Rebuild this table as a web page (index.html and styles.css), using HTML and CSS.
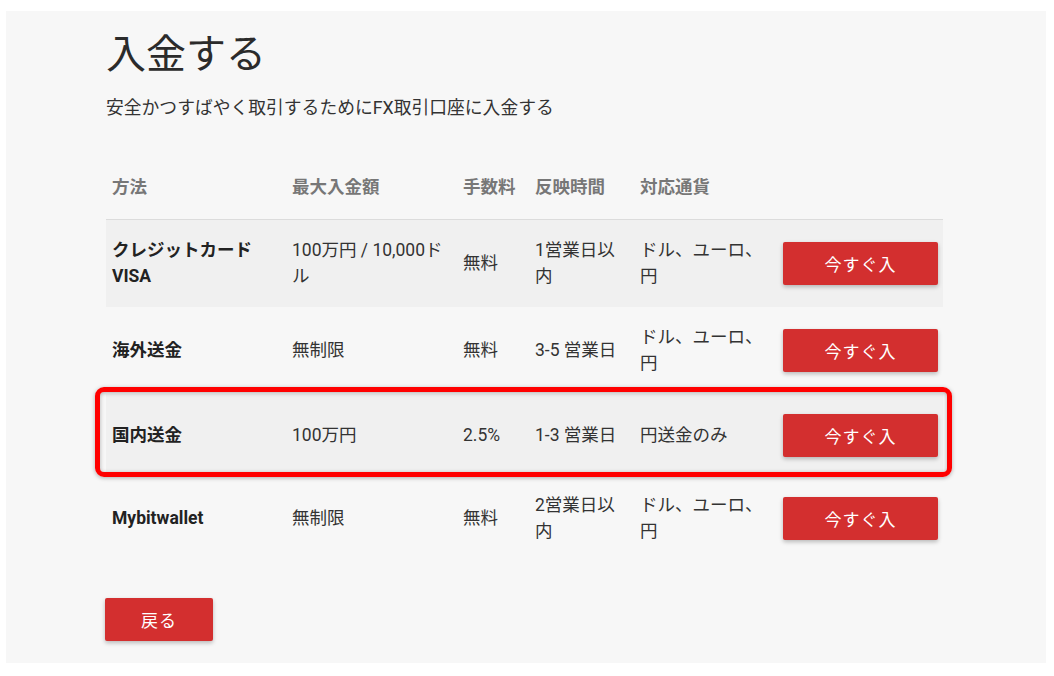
FILE: index.html
```html
<!DOCTYPE html>
<html lang="ja">

<head>
    <meta charset="UTF-8">
    <meta name="viewport" content="width=device-width, initial-scale=1.0">
    <title>入金する</title>
    <link rel="stylesheet" href="styles.css">
</head>

<body>
    <main class="panel">
        <h1 class="title">入金する</h1>
        <p class="lead">安全かつすばやく取引するためにFX取引口座に入金する</p>

        <table class="methods">
            <colgroup>
                <col class="c-method">
                <col class="c-max">
                <col class="c-fee">
                <col class="c-time">
                <col class="c-cur">
                <col class="c-btn">
            </colgroup>
            <thead>
                <tr>
                    <th>方法</th>
                    <th>最大入金額</th>
                    <th>手数料</th>
                    <th>反映時間</th>
                    <th>対応通貨</th>
                    <th></th>
                </tr>
            </thead>
            <tbody>
                <tr class="tall">
                    <td class="name">クレジットカード VISA</td>
                    <td>100万円 / 10,000ドル</td>
                    <td>無料</td>
                    <td>1営業日以内</td>
                    <td>ドル、ユーロ、円</td>
                    <td><button class="btn">今すぐ入</button></td>
                </tr>
                <tr class="tall">
                    <td class="name">海外送金</td>
                    <td>無制限</td>
                    <td>無料</td>
                    <td>3-5 営業日</td>
                    <td>ドル、ユーロ、円</td>
                    <td><button class="btn">今すぐ入</button></td>
                </tr>
                <tr>
                    <td class="name">国内送金</td>
                    <td>100万円</td>
                    <td>2.5%</td>
                    <td>1-3 営業日</td>
                    <td>円送金のみ</td>
                    <td><button class="btn">今すぐ入</button></td>
                </tr>
                <tr>
                    <td class="name">Mybitwallet</td>
                    <td>無制限</td>
                    <td>無料</td>
                    <td>2営業日以内</td>
                    <td>ドル、ユーロ、円</td>
                    <td><button class="btn">今すぐ入</button></td>
                </tr>
            </tbody>
        </table>

        <button class="btn back">戻る</button>

        <!-- highlight box drawn over the 国内送金 row -->
        <div class="mark"></div>
    </main>
</body>

</html>
```

FILE: styles.css
```css
* {
    margin: 0;
    padding: 0;
    box-sizing: border-box;
}

body {
    background-color: #fff;
    font-family: Roboto, "Noto Sans CJK JP", sans-serif;
    color: #333;
}

.panel {
    position: relative;
    margin: 11px 8px 13px 6px;
    height: 652px;
    padding: 20px 0 0 100px;
    background-color: #f7f7f7;
}

.title {
    font-size: 40px;
    line-height: 48px;
    font-weight: 400;
    color: #2b2b2b;
}

.lead {
    margin-top: 16px;
    font-size: 17.8px;
    line-height: 26px;
}

.methods {
    margin-top: 35px;
    width: 837px;
    table-layout: fixed;
    border-collapse: collapse;
    font-size: 17.5px;
    line-height: 26px;
}

.c-method { width: 180px; }
.c-max { width: 171px; }
.c-fee { width: 72px; }
.c-time { width: 105px; }
.c-cur { width: 143px; }
.c-btn { width: 166px; }

.methods th {
    padding: 18px 6px 19px;
    text-align: left;
    font-weight: 700;
    color: #777;
    border-bottom: 1px solid #dcdcdc;
}

.methods td {
    height: 83px;
    padding: 0 6px;
    vertical-align: middle;
}

.methods .tall td {
    height: 87px;
}

.methods tbody tr:nth-child(odd) {
    background-color: #f0f0f0;
}

.methods .name {
    font-weight: 700;
    color: #222;
}

.btn {
    display: block;
    width: 155px;
    height: 43px;
    border: none;
    border-radius: 2px;
    background-color: #d32f2f;
    color: #fff;
    font-family: Roboto, "Noto Sans CJK JP", sans-serif;
    font-size: 17px;
    letter-spacing: 1px;
    box-shadow: 0 2px 4px rgba(0, 0, 0, 0.25);
}

.back {
    width: 108px;
    margin: 38px 0 0 -1px;
}

.mark {
    position: absolute;
    left: 89px;
    top: 376px;
    width: 857px;
    height: 90px;
    border: 5px solid #ff0000;
    border-radius: 9px;
    box-shadow: 0 1px 4px rgba(0, 0, 0, 0.3), inset 0 1px 4px rgba(0, 0, 0, 0.3);
}
```
